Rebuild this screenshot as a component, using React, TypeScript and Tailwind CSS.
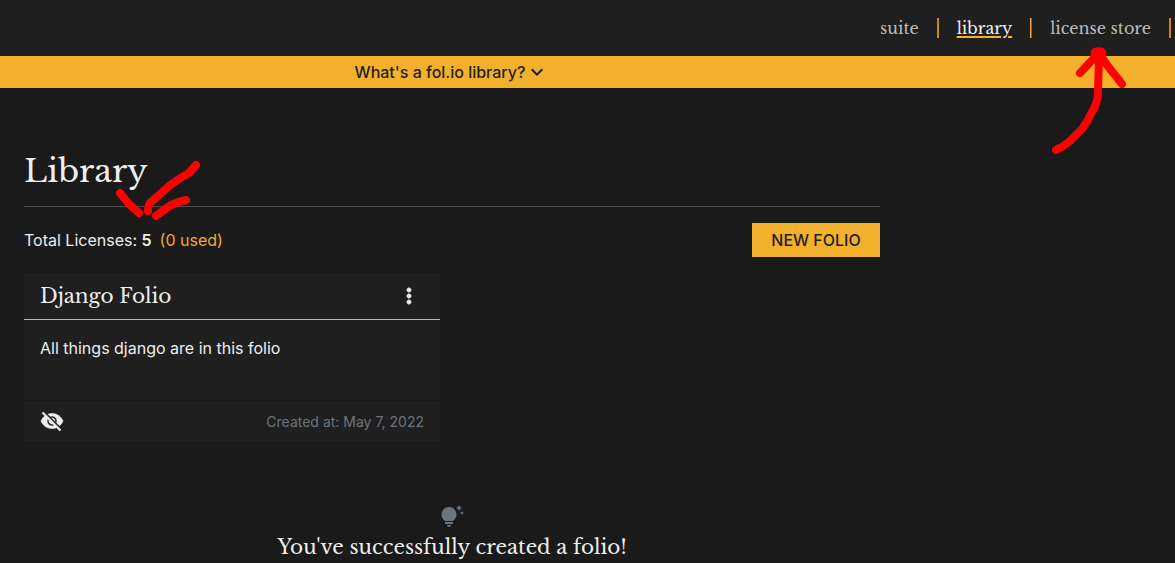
import { Fragment } from "react";
import { MdKeyboardArrowDown, MdMoreVert, MdTipsAndUpdates, MdVisibilityOff } from "react-icons/md";

const links = [
  { label: "suite", active: false, bar: "border-l-[#a8922f] border-r-[#cc8a1e]" },
  { label: "library", active: true, bar: "border-l-[#f5a04a] border-r-[#d8401c]" },
  { label: "license store", active: false, bar: "border-l-[#d9801c] border-r-[#d9801c]" },
];

function NavBar() {
  return (
    <header className="relative flex h-14 items-center justify-end bg-[#1f1f1f] pr-1 font-['Libre_Baskerville','Liberation_Serif',serif] text-[16px] leading-6">
      <nav className="flex items-center gap-[18px]">
        {links.map((link) => (
          <Fragment key={link.label}>
            <a
              href="#"
              className={
                link.active
                  ? "text-[#f0f0f0] underline decoration-[#f3b02c] decoration-2 underline-offset-2"
                  : "text-[#bdbdbd]"
              }
            >
              {link.label}
            </a>
            <span className={`h-5 w-0.5 border-x ${link.bar}`} />
          </Fragment>
        ))}
      </nav>
      <svg
        className="pointer-events-none absolute top-11 right-[46px] z-10"
        width="80"
        height="112"
        viewBox="1049 44 80 112"
        fill="none"
        stroke="#ff0000"
        strokeWidth="8"
        strokeLinecap="round"
        strokeLinejoin="round"
        aria-hidden="true"
      >
        <path d="M1056 150Q1063 147 1070 141L1082 129Q1088 121 1092 112Q1098 102 1098 93L1099 55" />
        <path d="M1080 73L1097 55" />
        <path d="M1122 84L1107 65L1099 53" />
        <path d="M1096 53L1101 53" strokeWidth="11" />
      </svg>
    </header>
  );
}

function FolioCard() {
  return (
    <article className="mt-4 w-full max-w-[416px] bg-[#1f1f1f]">
      <div className="flex h-[47px] items-center justify-between border-b border-[#f3b02c] px-4">
        <h2 className="font-['Libre_Baskerville','Liberation_Serif',serif] text-[20px] leading-7">Django Folio</h2>
        <button type="button" aria-label="Folio options" className="flex w-[30px] justify-center">
          <MdMoreVert size={24} className="[&>path:last-child]:stroke-1" />
        </button>
      </div>
      <p className="h-20 px-4 pt-4 text-[16px] leading-6">All things django are in this folio</p>
      <div className="flex h-[41px] items-center justify-between border-t border-[#1a1a1a] px-4">
        <button type="button" aria-label="Hidden folio">
          <MdVisibilityOff size={24} className="[&>path:last-child]:stroke-[0.6]" />
        </button>
        <span className="pt-0.5 text-[14px] leading-5 text-[#6c757d]">Created at: May 7, 2022</span>
      </div>
    </article>
  );
}

export default function App() {
  return (
    <div className="min-h-screen overflow-x-hidden bg-[#1a1a1a] font-['Inter',sans-serif] text-[#eeeeee]">
      <NavBar />
      <div className="bg-[#f3b02c] text-[#1f1f1f]">
        <div className="flex h-8 max-w-[904px] items-center justify-center">
          <button type="button" className="flex items-center text-[16px] leading-6 font-medium">
            What's a fol.io library?
            <MdKeyboardArrowDown size={24} />
          </button>
        </div>
      </div>
      <main className="max-w-[904px] px-6 pt-[60px]">
        <div className="relative border-b border-[#4d4d4d] pb-3">
          <h1 className="font-['Libre_Baskerville','Liberation_Serif',serif] text-[32px] leading-[46px]">Library</h1>
          <svg
            className="pointer-events-none absolute top-2 left-[86px]"
            width="100"
            height="70"
            viewBox="110 156 100 70"
            fill="none"
            stroke="#ff0000"
            strokeWidth="8"
            strokeLinecap="round"
            strokeLinejoin="round"
            aria-hidden="true"
          >
            <path d="M196 165L189 173Q176 180 167 188L150 203Q148 206 148 211" />
            <path d="M120 193L129 204L139 213" />
            <path d="M156 216L165 209Q173 203 186 200" />
          </svg>
        </div>
        <div className="mt-4 flex items-center justify-between">
          <p className="text-[16px] leading-6">
            Total Licenses: <strong className="font-semibold">5</strong>
            <span className="ml-2 text-[#f9a72b]">(0 used)</span>
          </p>
          <button type="button" className="h-[34px] w-32 bg-[#f3b02c] text-[16px] leading-6 font-medium text-[#1f1f1f]">
            NEW FOLIO
          </button>
        </div>
        <FolioCard />
        <section className="mt-16 flex flex-col items-center">
          <MdTipsAndUpdates size={24} className="text-[#6c757d]" />
          <h2 className="mt-1 font-['Libre_Baskerville','Liberation_Serif',serif] text-[20px] leading-7">
            You've successfully created a folio!
          </h2>
        </section>
      </main>
    </div>
  );
}
